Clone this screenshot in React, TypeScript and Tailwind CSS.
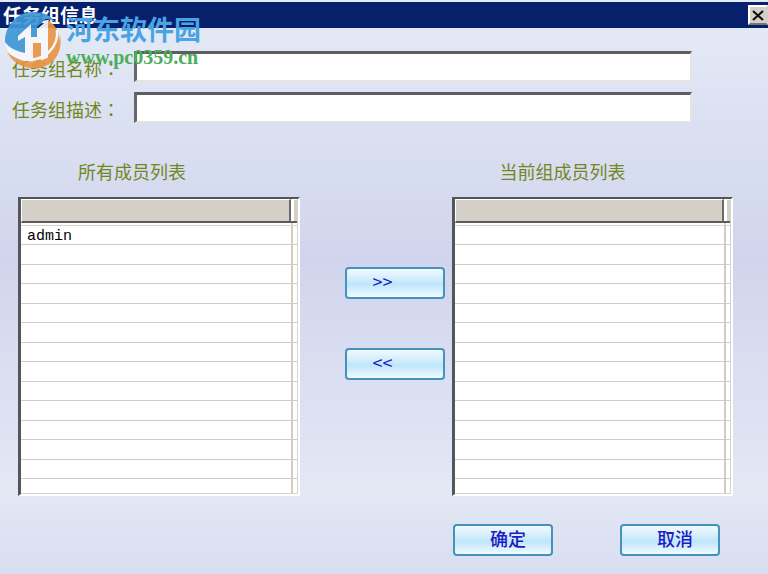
import React from "react";

const ROWS = 14;

function MemberList({ title, titleClass, members }: { title: string; titleClass: string; members: string[] }) {
  return (
    <section className="min-w-0">
      <h2 className={`h-[36px] text-[18px] leading-[20px] text-[#73861f] ${titleClass}`}>{title}</h2>
      <div className="border-t-2 border-r-2 border-b-2 border-l-3 border-t-[#555] border-r-white border-b-white border-l-[#55555c] bg-white">
        <table aria-label={title} className="w-full table-fixed border-separate border-spacing-0 border-r border-b border-[#d6d3ca]">
          <thead>
            <tr>
              <th className="h-[24px] border-t border-r-2 border-b-2 border-l border-t-white border-r-[#6b6967] border-b-[#5c5a58] border-l-white bg-[#d4d0c7] p-0" />
              <th className="h-[24px] w-[6px] border-t border-b-2 border-t-white border-b-[#5c5a58] bg-linear-to-r from-white from-50% to-[#d4d0c7] to-50% p-0" />
            </tr>
          </thead>
          <tbody>
            <tr>
              <td className="h-[3px] border-b border-[#d6d3ca] p-0" />
              <td className="h-[3px] border-b border-l-2 border-[#d6d3ca] p-0" />
            </tr>
            {Array.from({ length: ROWS }, (_, i) => (
              <tr key={i} className={i === ROWS - 1 ? "h-[14px]" : i % 2 ? "h-[20px]" : "h-[19px]"}>
                <td
                  className={`border-[#d0cdc4] pr-0 pb-0 pl-[6px] font-['Liberation_Mono','Noto_Sans_CJK_SC',monospace] text-[15px] leading-[14px] text-black ${members[i] ? "pt-[3px]" : "pt-0"} ${i < ROWS - 1 ? "border-b" : ""}`}
                >
                  {members[i]}
                </td>
                <td className={`border-l-2 border-[#d0cdc4] p-0 ${i < ROWS - 1 ? "border-b" : ""}`} />
              </tr>
            ))}
          </tbody>
        </table>
      </div>
    </section>
  );
}

function GlassButton({ children, label, className }: { children: React.ReactNode; label?: string; className: string }) {
  return (
    <button
      type="button"
      aria-label={label}
      className={`h-[32px] w-[100px] rounded-[4px] border-2 border-[#4592bd] bg-linear-to-b from-[#f2fafe] via-[#bfe6fb] via-55% to-[#f0faff] pb-[4px] text-[18px] leading-[24px] text-[#1c1cc4] ${className}`}
    >
      {children}
    </button>
  );
}

function Field({ id, label }: { id: string; label: string }) {
  return (
    <div className="flex items-center">
      <label htmlFor={id} className="w-[122px] shrink-0 pt-[2px] text-[18px] leading-[24px] whitespace-nowrap text-[#73861f]">
        {label}
        <span className="font-['Noto_Sans_CJK_TC',sans-serif]" lang="zh-TW">：</span>
      </label>
      <input
        id={id}
        type="text"
        className="h-[31px] min-w-0 flex-1 border-t-3 border-r-2 border-b-2 border-l-3 border-t-[#5e5e62] border-r-[#e6e4e0] border-b-[#e6e4e0] border-l-[#66666c] bg-white px-2 text-[16px] outline-none"
      />
    </div>
  );
}

function Watermark() {
  return (
    <div className="pointer-events-none absolute top-[11px] left-[4px] flex">
      <svg width="58" height="58" viewBox="0 0 58 58" aria-hidden="true" opacity="0.92">
        <path d="M1 31C1 14 13 1 29 1c10 0 18 3 23 11-4-3-7-4-10-4L33 16v30L14 41C8 39 3 36 1 31z" fill="#3f97d5" />
        <path d="M44 9c9 6 13 15 11 26-2 9-8 14-15 16V12z" fill="#ea9446" />
        <path d="M14 25 27 13v13h6V18l11-9v38l-7 3V32h-8v18l-8-1V26l-7 4z" fill="#f6f8fc" />
        <path d="M29 32h8v18l-8 1z" fill="#ea9446" />
        <path d="M1 31c4 6 11 9 20 11v8C10 47 2 42 1 31z" fill="#f6f8fc" />
        <path d="M2 38c10 13 28 16 41 9 8-4 13-12 13-23 3 16-5 30-20 33C20 59 7 52 2 38z" fill="#ea9446" />
        <path d="M3 39c12 12 31 13 42 2 6-6 9-14 8-22" fill="none" stroke="#f6f8fc" strokeWidth="2.5" />
      </svg>
      <div className="pl-[4px]">
        <div className="pt-[3px] text-[27px] leading-[30px] font-bold text-[#4aa3e3]">河东软件园</div>
        <div className="font-['Liberation_Serif',serif] text-[20px] leading-[26px] font-bold text-[#4bae59]">www.pc0359.cn</div>
      </div>
    </div>
  );
}

export default function App() {
  return (
    <div className="relative min-h-screen bg-linear-to-b from-[#e3e9f5] from-5% via-[#d0d5ed] via-45% to-[#e3e8f5] to-85% pt-[2px] font-['Noto_Sans_CJK_SC',sans-serif]">
      <div className="pointer-events-none absolute inset-x-0 bottom-0 h-[80px] bg-linear-to-b from-transparent to-[#d8ddf1]" />
      <header className="flex h-[26px] items-center justify-between bg-[#06206c] pl-[3px]">
        <h1 className="text-[19px] leading-[24px] font-bold text-white">任务组信息</h1>
        <button
          type="button"
          aria-label="关闭"
          className="flex h-[20px] w-[20px] items-center justify-center border-2 border-t-white border-r-[#d4d0c7] border-b-[#77746e] border-l-white bg-[#d4d0c7]"
        >
          <svg width="12" height="11" viewBox="0 0 12 11" aria-hidden="true">
            <path d="m1 1 10 9M11 1 1 10" stroke="#111" strokeWidth="2.2" />
          </svg>
        </button>
      </header>
      <form className="relative">
        <div className="flex flex-col gap-[10px] pt-[23px] pr-[76px] pl-[12px]">
          <Field id="group-name" label="任务组名称" />
          <Field id="group-desc" label="任务组描述" />
        </div>
        <div className="grid grid-cols-[1fr_152px_1fr] pt-[38px] pr-[35px] pl-[18px]">
          <MemberList title="所有成员列表" titleClass="pl-[60px]" members={["admin"]} />
          <div className="flex flex-col items-end gap-[49px] pt-[106px] pr-[7px]">
            <GlassButton label="添加成员" className="pr-[24px]">{">>"}</GlassButton>
            <GlassButton label="移除成员" className="pr-[24px]">{"<<"}</GlassButton>
          </div>
          <MemberList title="当前组成员列表" titleClass="pl-[48px]" members={[]} />
        </div>
        <div className="flex justify-end gap-[67px] pt-[28px] pr-[48px]">
          <GlassButton className="pl-[10px] font-medium">确定</GlassButton>
          <GlassButton className="pl-[10px] font-medium">取消</GlassButton>
        </div>
      </form>
      <Watermark />
    </div>
  );
}
